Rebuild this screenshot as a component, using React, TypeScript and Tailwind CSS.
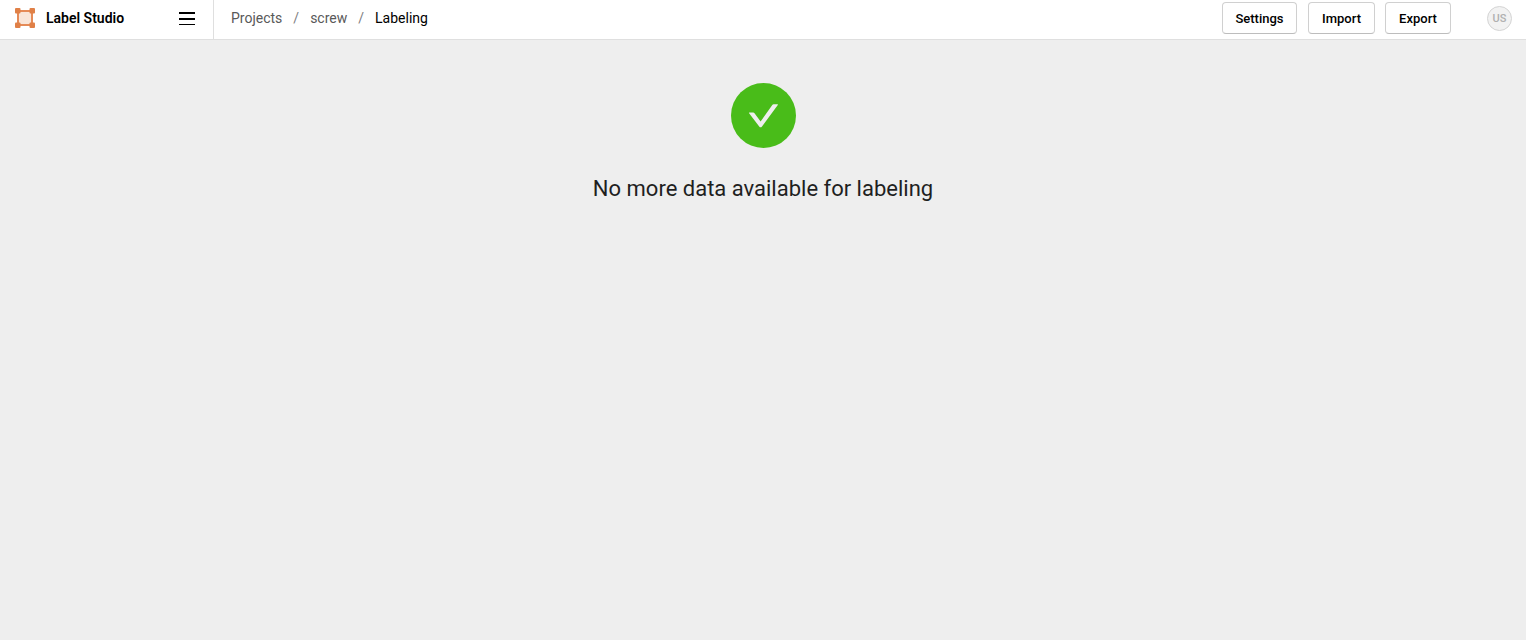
import React from "react";

const actions = [
  { label: "Settings", width: "min-w-[75px]" },
  { label: "Import", width: "ml-[11px] min-w-[67px]" },
  { label: "Export", width: "ml-[10px] min-w-[66px]" },
];

function Logo() {
  return (
    <svg width="20" height="20" viewBox="0 0 20 20" aria-hidden="true">
      <rect x="3" y="3" width="14" height="14" fill="#f9e5d8" stroke="#e58a57" strokeWidth="2" />
      <g fill="#e08047">
        <rect x="0" y="0" width="5.5" height="5.5" rx="1" />
        <rect x="14.5" y="0" width="5.5" height="5.5" rx="1" />
        <rect x="0" y="14.5" width="5.5" height="5.5" rx="1" />
        <rect x="14.5" y="14.5" width="5.5" height="5.5" rx="1" />
      </g>
    </svg>
  );
}

function Header() {
  return (
    <header className="flex h-10 items-stretch border-b border-[#dfdfdf] bg-white">
      <div className="flex w-[214px] shrink-0 items-center justify-between border-r border-[#dfdfdf] pr-[18px] pb-[3px] pl-[15px]">
        <a href="#" className="flex items-center gap-[11px] text-sm leading-5 font-semibold text-black">
          <Logo />
          Label Studio
        </a>
        <button type="button" aria-label="Menu" className="flex flex-col gap-1">
          <span className="h-0.5 w-4 bg-black" />
          <span className="h-0.5 w-4 bg-black" />
          <span className="h-px w-4 bg-black" />
        </button>
      </div>
      <nav aria-label="Breadcrumb" className="flex flex-1 items-center pb-[3px] pl-[17px]">
        <ol className="flex items-center gap-[11px] text-sm leading-5 text-[#595959]">
          <li><a href="#">Projects</a></li>
          <li aria-hidden="true" className="text-[#808080]">/</li>
          <li><a href="#">screw</a></li>
          <li aria-hidden="true" className="text-[#808080]">/</li>
          <li aria-current="page" className="text-black">Labeling</li>
        </ol>
      </nav>
      <div className="flex items-center pr-[14px] pb-[3px]">
        {actions.map((action) => (
          <button
            key={action.label}
            type="button"
            className={`h-8 rounded-[4px] border border-[#d0d0d0] border-b-[#bdbdbd] bg-white pt-0.5 text-[13px] leading-5 font-medium text-black ${action.width}`}
          >
            {action.label}
          </button>
        ))}
        <button
          type="button"
          aria-label="User US"
          className="ml-9 flex size-[25px] items-center justify-center rounded-full border border-[#d4d4d4] bg-[#f2f2f2] pt-0.5 text-[11px] leading-4 font-medium text-[#b0b0b0]"
        >
          US
        </button>
      </div>
    </header>
  );
}

export default function App() {
  return (
    <div className="flex min-h-screen flex-col bg-[#eeeeee] font-['Roboto',sans-serif]">
      <Header />
      <main className="flex flex-1 flex-col items-center pt-[43px]">
        <svg width="65" height="65" viewBox="0 0 65 65" aria-hidden="true">
          <circle cx="32.5" cy="32.5" r="32.5" fill="#49bc19" />
          <path
            d="M18.4 29.5H22.2Q23 29.5 23.5 30.2L29.6 38.5L41.3 22Q41.8 21.3 42.6 21.3H46.5Q47.2 21.3 46.8 21.9L31 43.5Q29.6 45.2 28.2 43.5L18.1 30.2Q17.7 29.5 18.4 29.5Z"
            fill="#eeeeee"
          />
        </svg>
        <h1 className="mt-[25px] text-[22px] leading-8 font-normal text-[#1f1f1f]">
          No more data available for labeling
        </h1>
      </main>
    </div>
  );
}
